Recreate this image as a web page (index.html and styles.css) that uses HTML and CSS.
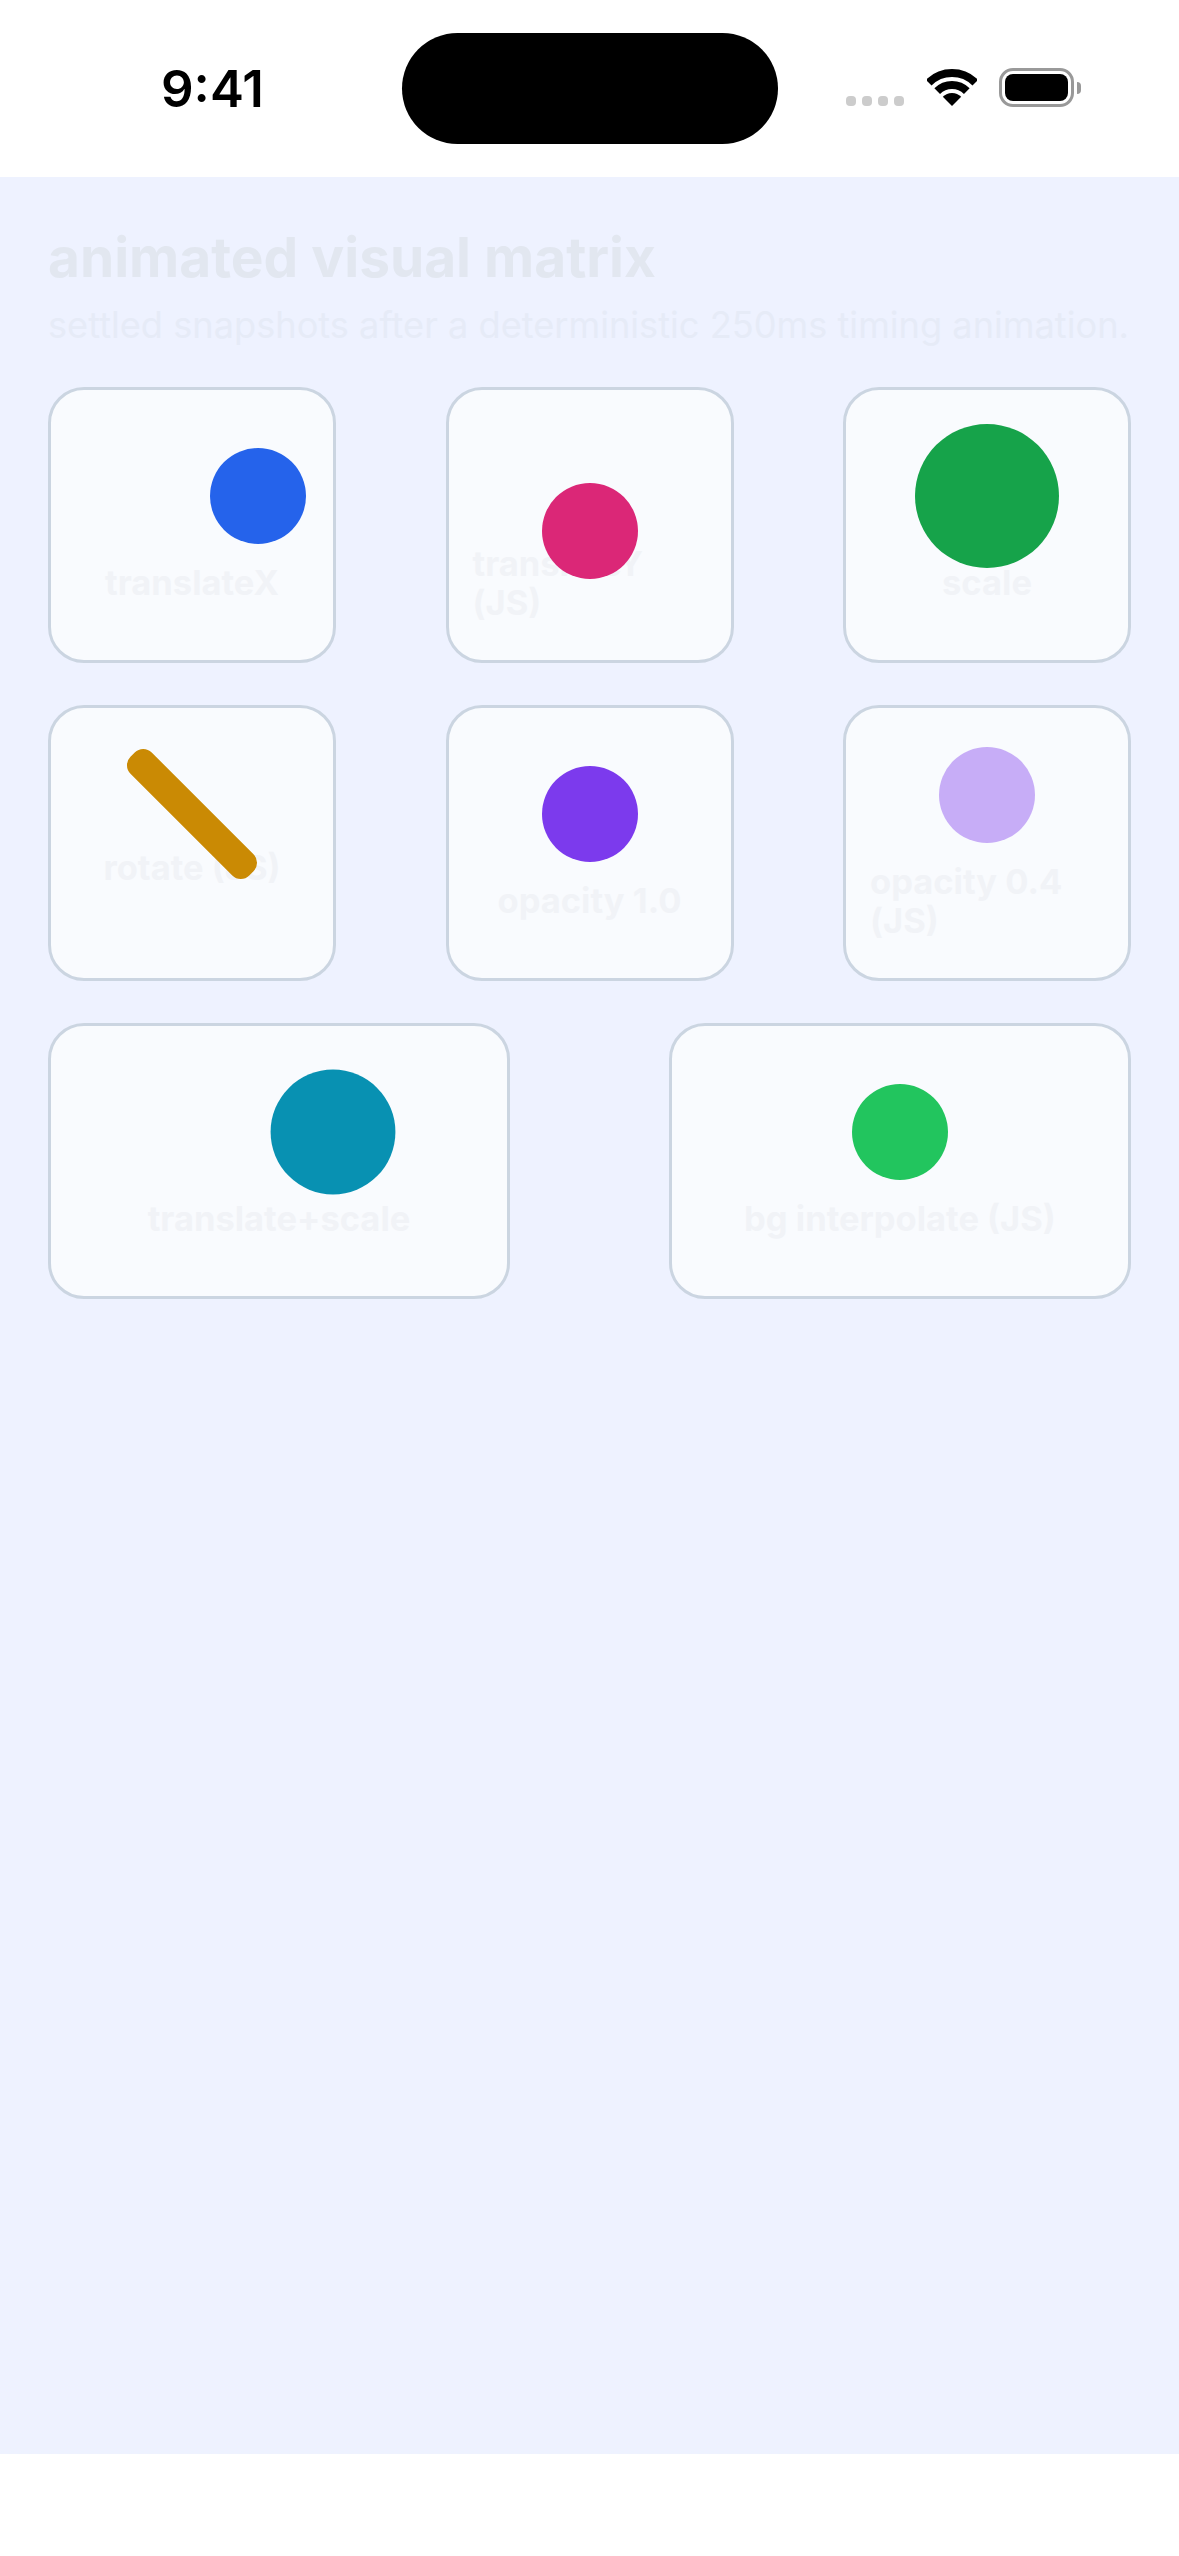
FILE: index.html
```html
<!DOCTYPE html>
<html lang="en">
<head>
<meta charset="UTF-8" />
<title>animated visual matrix</title>
<link rel="stylesheet" href="styles.css">
</head>
<body>
  <div class="app">
    <div class="statusbar">
      <span class="time">9:41</span>
      <div class="island"></div>
      <div class="signal"><i></i><i></i><i></i><i></i></div>
      <svg class="wifi" width="50" height="37" viewBox="0 0 50 37">
        <path d="M1.7 13.7A33 33 0 0 1 48.3 13.7" fill="none" stroke="#000" stroke-width="8" />
        <path d="M10.2 22.2A21 21 0 0 1 39.8 22.2" fill="none" stroke="#000" stroke-width="8" />
        <path d="M25 37L15.8 27.8A13 13 0 0 1 34.2 27.8Z" fill="#000" />
      </svg>
      <div class="battery"><div class="battery-fill"></div></div>
      <div class="battery-nub"></div>
    </div>

    <main class="screen">
      <h1>animated visual matrix</h1>
      <p class="hint">settled snapshots after a deterministic 250ms timing animation.</p>

      <div class="row">
        <div class="card">
          <div class="dot dot-translatex"></div>
          <div class="label">translateX</div>
        </div>
        <div class="card">
          <div class="dot dot-translatey"></div>
          <div class="label">translateY (JS)</div>
        </div>
        <div class="card">
          <div class="dot dot-scale"></div>
          <div class="label">scale</div>
        </div>
      </div>

      <div class="row">
        <div class="card">
          <div class="bar"></div>
          <div class="label">rotate (JS)</div>
        </div>
        <div class="card">
          <div class="dot dot-opacity"></div>
          <div class="label">opacity 1.0</div>
        </div>
        <div class="card">
          <div class="dot dot-opacity-low"></div>
          <div class="label">opacity 0.4 (JS)</div>
        </div>
      </div>

      <div class="row">
        <div class="card wide">
          <div class="dot dot-combo"></div>
          <div class="label">translate+scale</div>
        </div>
        <div class="card wide">
          <div class="dot dot-bg"></div>
          <div class="label">bg interpolate (JS)</div>
        </div>
      </div>
    </main>

    <div class="homebar"></div>
  </div>
</body>
</html>
```

FILE: styles.css
```css
* { box-sizing: border-box; }
body { margin: 0; background: #fff; font-family: Inter, "Liberation Sans", sans-serif; }
.app { display: flex; flex-direction: column; height: 2556px; }

/* status bar */
.statusbar { display: flex; align-items: flex-start; height: 177px; padding-left: 161px; background: #fff; }
.time { width: 241px; margin-top: 58px; font-size: 51px; line-height: 62px; font-weight: 600; color: #000; }
.island { width: 376px; height: 111px; margin-top: 33px; border-radius: 56px; background: #000; }
.signal { display: flex; gap: 6px; margin: 96px 0 0 68px; }
.signal i { width: 10px; height: 10px; border-radius: 4px; background: #ccc; }
.wifi { margin: 69px 0 0 23px; }
.battery { width: 75px; height: 39px; margin: 68px 0 0 22px; padding: 3px; border: 3px solid #999; border-radius: 14px; }
.battery-fill { height: 27px; border-radius: 8px; background: #000; }
.battery-nub { width: 4px; height: 12px; margin: 82px 0 0 3px; border-radius: 0 4px 4px 0; background: #999; }

/* main area */
.screen { flex: 1; padding: 47px 48px 0; background: #eef2ff; }
h1 { margin: 0; font-size: 55px; line-height: 66px; font-weight: 700; color: #e2e7f0; }
.hint { margin: 11px 0 0; font-size: 36.2px; line-height: 48px; color: #e6ebf7; white-space: nowrap; }

.row { display: flex; justify-content: space-between; margin-bottom: 42px; }
.hint + .row { margin-top: 38px; }

.card { display: flex; flex-direction: column; align-items: center; justify-content: center; gap: 19px; width: 288px; height: 276px; padding: 24px; border: 3px solid #cbd5e1; border-radius: 36px; background: #f9fbfe; }
.card.wide { width: 462px; }
.label { font-size: 34.5px; line-height: 39px; font-weight: 700; color: #f1f3f7; }

.dot { flex: none; width: 96px; height: 96px; border-radius: 50%; }
.dot-translatex { background: #2563eb; transform: translateX(66px); }
.dot-translatey { background: #db2777; transform: translateY(54px); }
.dot-scale { background: #16a34a; transform: scale(1.5); }
.dot-opacity { background: #7c3aed; }
.dot-opacity-low { background: #7c3aed; opacity: .4; }
.dot-combo { background: #0891b2; transform: translateX(54px) scale(1.3); }
.dot-bg { background: #22c55e; }

.bar { flex: none; width: 168px; height: 30px; border-radius: 12px; background: #ca8a04; transform: rotate(45deg); }

.homebar { height: 102px; background: #fff; }
```
